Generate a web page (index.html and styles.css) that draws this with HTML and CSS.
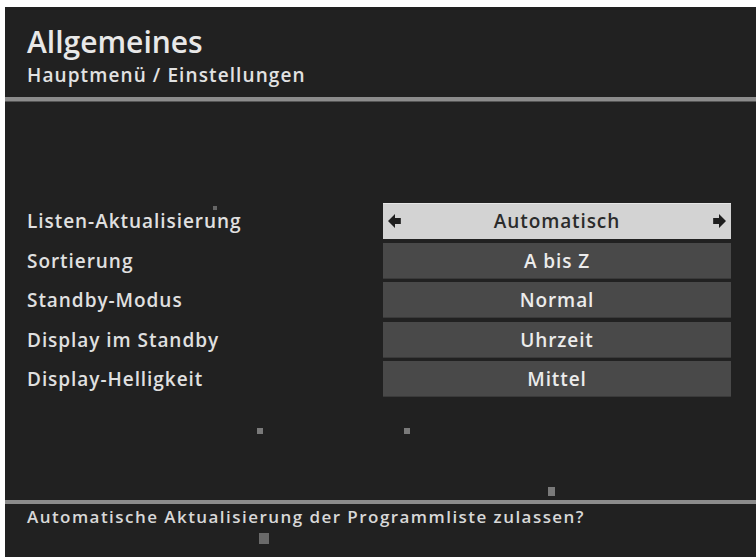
FILE: index.html
```html
<!DOCTYPE html>
<html lang="de">
<head>
    <meta charset="UTF-8">
    <title>Allgemeines</title>
    <link rel="stylesheet" href="styles.css">
</head>
<body>
    <div class="screen">
        <div class="header">
            <h1>Allgemeines</h1>
            <div class="crumb">Hauptmenü / Einstellungen</div>
        </div>

        <div class="menu">
            <div class="row">
                <div class="label">Listen-Aktualisierung</div>
                <div class="value active">
                    <svg class="arrow" viewBox="0 0 12 12"><path d="M0 6 L6 0 L6 3.5 L11 3.5 L11 8.5 L6 8.5 L6 12 Z"/></svg>
                    <span>Automatisch</span>
                    <svg class="arrow" viewBox="0 0 12 12"><path d="M12 6 L6 0 L6 3.5 L1 3.5 L1 8.5 L6 8.5 L6 12 Z"/></svg>
                </div>
            </div>
            <div class="row">
                <div class="label">Sortierung</div>
                <div class="value"><span>A bis Z</span></div>
            </div>
            <div class="row">
                <div class="label">Standby-Modus</div>
                <div class="value"><span>Normal</span></div>
            </div>
            <div class="row">
                <div class="label">Display im Standby</div>
                <div class="value"><span>Uhrzeit</span></div>
            </div>
            <div class="row">
                <div class="label">Display-Helligkeit</div>
                <div class="value"><span>Mittel</span></div>
            </div>
        </div>

        <div class="footer">Automatische Aktualisierung der Programmliste zulassen?</div>

        <!-- Bildrauschen -->
        <i class="speck s1"></i>
        <i class="speck s2"></i>
        <i class="speck s3"></i>
        <i class="speck s4"></i>
        <i class="speck s5"></i>
    </div>
</body>
</html>
```

FILE: styles.css
```css
body {
    margin: 0;
    background-color: #fff;
    font-family: 'Open Sans', 'DejaVu Sans', sans-serif;
}
.screen {
    position: relative;
    margin: 7px 0 0 5px;
    height: 550px;
    background-color: #212121;
    color: #e6e6e6;
    display: flex;
    flex-direction: column;
}
.header {
    padding: 17px 22px 10px;
    border-bottom: 4px solid #8c8c8c;
    box-shadow: 0 1px 0 #555;
}
.header h1 {
    margin: 0;
    font-size: 30px;
    line-height: 35px;
    font-weight: 600;
    color: #e8e8e8;
}
.crumb {
    margin-top: 4px;
    font-size: 19px;
    line-height: 24px;
    font-weight: 600;
    letter-spacing: 1.1px;
    color: #e2e2e2;
}
.menu {
    margin-top: 102px;
    padding-left: 22px;
    display: flex;
    flex-direction: column;
    gap: 3.5px;
}
.row {
    display: flex;
    align-items: center;
}
.label {
    width: 356px;
    font-size: 19px;
    font-weight: 600;
    letter-spacing: 0.95px;
    color: #e0e0e0;
}
.value {
    width: 348px;
    height: 36px;
    display: flex;
    align-items: center;
    justify-content: center;
    position: relative;
    background-color: #494949;
    box-shadow: inset 0 -1px 0 #3a3a3a;
    font-size: 19px;
    font-weight: 600;
    letter-spacing: 0.9px;
    color: #ececec;
}
.value.active {
    background-color: #d3d3d3;
    box-shadow: inset 0 1px 0 #e6e6e6;
    color: #2b2b2b;
    justify-content: space-between;
    padding: 0 5px;
    box-sizing: border-box;
}
.arrow {
    width: 14px;
    height: 14px;
    fill: #1e1e1e;
}
.footer {
    margin-top: auto;
    height: 51px;
    padding: 2px 22px 0;
    border-top: 4px solid #8c8c8c;
    font-size: 17px;
    line-height: 22px;
    font-weight: 600;
    letter-spacing: 1.45px;
    color: #d8d8d8;
}
.speck {
    position: absolute;
    background-color: #7a7a7a;
}
.s1 { left: 252px; top: 421px; width: 6px; height: 6px; }
.s2 { left: 399px; top: 421px; width: 6px; height: 6px; }
.s3 { left: 543px; top: 480px; width: 7px; height: 9px; }
.s4 { left: 254px; top: 526px; width: 10px; height: 11px; background-color: #6a6a6a; }
.s5 { left: 208px; top: 199px; width: 4px; height: 4px; background-color: #666; }
```
